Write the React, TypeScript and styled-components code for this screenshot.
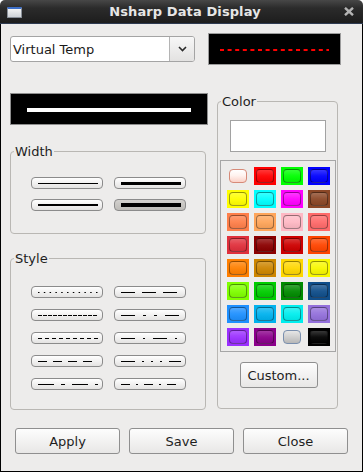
import React from "react";
import styled, { createGlobalStyle } from "styled-components";

const Global = createGlobalStyle`
  html, body { margin: 0; padding: 0; background: #ffffff; }
  body { font-family: "DejaVu Sans", "Liberation Sans", sans-serif; font-size: 13px; color: #1e1e1e; }
  * { box-sizing: border-box; }
`;

const Window = styled.div`
  width: 363px;
  height: 472px;
  display: flex;
  flex-direction: column;
`;

const TitleBar = styled.div`
  height: 24px;
  flex: none;
  border-radius: 5px 5px 0 0;
  background: linear-gradient(180deg, #474747 0%, #2b2b2b 35%, #1d1d1d 100%);
  border-bottom: 1px solid #2d3a50;
  display: flex;
  align-items: center;
  padding: 0 9px 0 7px;
`;

const TitleIcon = styled.div`
  width: 15px;
  height: 11px;
  margin-top: 2px;
  background: linear-gradient(180deg, #f4f4f4, #cfd3d8);
  border: 1px solid #8a9099;
  border-top: 2px solid #3d6fc8;
  border-radius: 1px;
`;

const Title = styled.div`
  flex: 1;
  text-align: center;
  font-weight: bold;
  font-size: 13px;
  color: #e6e6e6;
  letter-spacing: 0.1px;
  margin-left: 4px;
`;

const Body = styled.div`
  flex: 1;
  background: #edeceb;
  border-left: 1px solid #000;
  border-right: 1px solid #000;
  border-bottom: 1px solid #000;
  display: flex;
  flex-direction: column;
  padding: 9px 0 0 9px;
`;

const TopRow = styled.div`
  display: flex;
  align-items: center;
  gap: 13px;
  height: 32px;
`;

const Combo = styled.div`
  width: 185px;
  height: 26px;
  border: 1px solid #a4a4a4;
  border-radius: 3px;
  background: #ffffff;
  display: flex;
  overflow: hidden;
`;

const ComboText = styled.div`
  flex: 1;
  padding-left: 2px;
  display: flex;
  align-items: center;
  font-size: 13px;
  color: #1a1a1a;
`;

const ComboButton = styled.div`
  width: 25px;
  border-left: 1px solid #b4b4b4;
  background: linear-gradient(180deg, #f7f7f7, #e3e2e1);
  display: flex;
  align-items: center;
  justify-content: center;
`;

const DashPreview = styled.div`
  width: 133px;
  height: 32px;
  background: #000;
  border: 1px solid #9c9c9c;
  display: flex;
  align-items: center;
  justify-content: center;
`;

const MainRow = styled.div`
  display: flex;
  gap: 9px;
  margin-top: 28px;
  align-items: flex-start;
`;

const LeftCol = styled.div`
  width: 198px;
  display: flex;
  flex-direction: column;
  align-items: flex-start;
`;

const LinePreview = styled.div`
  width: 198px;
  height: 32px;
  background: #000;
  border: 1px solid #8e8e8e;
  display: flex;
  align-items: center;
  padding: 0 16px;
`;

const WhiteLine = styled.div`
  flex: 1;
  height: 4px;
  margin-top: 1px;
  background: #ffffff;
`;

const Group = styled.fieldset<{ $w: number; $mt: number }>`
  width: ${(p) => p.$w}px;
  margin: ${(p) => p.$mt}px 0 0 0;
  padding: 0;
  border: 1px solid #b9b7b3;
  border-radius: 4px;
  min-width: 0;
`;

const Legend = styled.legend`
  padding: 0 1px;
  margin-left: 3px;
  font-size: 13px;
  line-height: 15px;
  color: #1e1e1e;
`;

const ButtonGrid = styled.div<{ $pt: number; $pb: number; $gap: number }>`
  display: grid;
  grid-template-columns: 72px 72px;
  column-gap: 11px;
  row-gap: ${(p) => p.$gap}px;
  justify-content: center;
  padding: ${(p) => p.$pt}px 0 ${(p) => p.$pb}px 0;
`;

const LineButton = styled.div<{ $selected?: boolean }>`
  height: 12px;
  border: 1px solid #8b8b8b;
  border-radius: 4px;
  background: ${(p) =>
    p.$selected
      ? "linear-gradient(180deg, #d3d1ce, #bdbbb7)"
      : "linear-gradient(180deg, #ffffff, #e4e3e2)"};
  display: flex;
  align-items: center;
  padding: 0 4px 0 6px;
`;

const Bar = styled.div<{ $t: number }>`
  flex: 1;
  height: ${(p) => p.$t}px;
  background: #000;
`;

const ColorInner = styled.div`
  display: flex;
  flex-direction: column;
  align-items: center;
  padding: 11px 0 20px 0;
`;

const ColorPreview = styled.div`
  width: 96px;
  height: 32px;
  background: #ffffff;
  border: 1px solid #a2a2a2;
`;

const SwatchPanel = styled.div`
  margin-top: 8px;
  margin-left: 1px;
  width: 116px;
  border: 1px solid #a6a6a6;
  display: grid;
  grid-template-columns: repeat(4, 22px);
  column-gap: 5px;
  row-gap: 5px;
  padding: 6px 5px 5px 6px;
`;

const Swatch = styled.div<{ $bg: string }>`
  width: 22px;
  height: 18px;
  padding: 2px;
  background: ${(p) => p.$bg};
  display: flex;
`;

const SwatchFace = styled.div<{ $face: string; $edge: string }>`
  flex: 1;
  border-radius: 4px;
  border: 1px solid ${(p) => p.$edge};
  background: ${(p) => p.$face};
`;

const PushButton = styled.button<{ $w: number }>`
  width: ${(p) => p.$w}px;
  height: 26px;
  border: 1px solid #8f8f8f;
  border-radius: 3px;
  background: linear-gradient(180deg, #fdfdfd, #e8e7e6);
  font-family: "DejaVu Sans", "Liberation Sans", sans-serif;
  font-size: 13px;
  color: #1e1e1e;
  padding: 0;
  display: flex;
  align-items: center;
  justify-content: center;
`;

const CustomWrap = styled.div`
  margin-top: 10px;
  margin-left: 2px;
`;

const ButtonRow = styled.div`
  display: flex;
  gap: 9px;
  margin-top: 18px;
  padding-left: 5px;
`;

const widths = [1, 3, 2, 4];

const styles = [
  "1.5 4.3",
  "14 7",
  "4 1",
  "14 8 3 8 3 8",
  "4 3",
  "14 8 2 8",
  "9 6",
  "14 7 2 7 2 7 2 7",
  "16 7 4 7",
  "9 6 2 6",
];

type Sw = { c: string; special?: "white" | "gray" };
const swatches: Sw[] = [
  { c: "#ffffff", special: "white" }, { c: "#ff0000" }, { c: "#00ff00" }, { c: "#0000ff" },
  { c: "#ffff00" }, { c: "#00ffff" }, { c: "#ff00ff" }, { c: "#8b4726" },
  { c: "#ff7f4a" }, { c: "#ffa55a" }, { c: "#ffb8c4" }, { c: "#ff6a6a" },
  { c: "#e0303c" }, { c: "#8b0000" }, { c: "#cd0000" }, { c: "#ff4500" },
  { c: "#ff7f00" }, { c: "#cd8500" }, { c: "#ffd700" }, { c: "#f8f800" },
  { c: "#7fff00" }, { c: "#00cd00" }, { c: "#008b00" }, { c: "#104e8b" },
  { c: "#1e90ff" }, { c: "#00b2ee" }, { c: "#00eeee" }, { c: "#9370db" },
  { c: "#9b30ff" }, { c: "#8b008b" }, { c: "#c8c8c8", special: "gray" }, { c: "#000000" },
];

function swatchProps(s: Sw) {
  if (s.special === "white") {
    return {
      bg: "transparent",
      face: "linear-gradient(180deg, #ffffff 0%, #fff3ef 45%, #fbd2c8 100%)",
      edge: "#d68a78",
    };
  }
  if (s.special === "gray") {
    return {
      bg: "transparent",
      face: "linear-gradient(180deg, #e6e6e6 0%, #cfcfcf 50%, #b7b7b7 100%)",
      edge: "#7a8fae",
    };
  }
  return {
    bg: s.c,
    face: `linear-gradient(180deg, rgba(255,255,255,0.22) 0%, rgba(255,255,255,0.05) 50%, rgba(0,0,0,0.06) 100%), ${s.c}`,
    edge: "rgba(0,0,0,0.38)",
  };
}

const StyleLine: React.FC<{ dash: string }> = ({ dash }) => (
  <svg width="60" height="3" style={{ display: "block" }}>
    <line x1="0" y1="1.5" x2="60" y2="1.5" stroke="#000" strokeWidth="1" strokeDasharray={dash} />
  </svg>
);

const StyleButton = styled(LineButton)`
  padding: 0 0 0 6px;
`;

export default function App() {
  return (
    <>
      <Global />
      <Window>
        <TitleBar>
          <TitleIcon />
          <Title>Nsharp Data Display</Title>
          <svg width="10" height="9" viewBox="0 0 10 9">
            <path d="M1 0.8 L9 8.2 M9 0.8 L1 8.2" stroke="#b4b4b4" strokeWidth="2.4" strokeLinecap="butt" />
          </svg>
        </TitleBar>
        <Body>
          <TopRow>
            <Combo>
              <ComboText>Virtual Temp</ComboText>
              <ComboButton>
                <svg width="9" height="6" viewBox="0 0 9 6">
                  <path d="M1 1 L4.5 4.5 L8 1" stroke="#2a2a2a" strokeWidth="1.6" fill="none" />
                </svg>
              </ComboButton>
            </Combo>
            <DashPreview>
              <svg width="109" height="2" style={{ display: "block", marginTop: "1px" }}>
                <line x1="0" y1="1" x2="109" y2="1" stroke="#ff0000" strokeWidth="2" strokeDasharray="4 3.6" />
              </svg>
            </DashPreview>
          </TopRow>
          <MainRow>
            <LeftCol>
              <LinePreview>
                <WhiteLine />
              </LinePreview>
              <Group $w={196} $mt={19}>
                <Legend>Width</Legend>
                <ButtonGrid $pt={18} $pb={22} $gap={10}>
                  {widths.map((w, i) => (
                    <LineButton key={i} $selected={w === 4}>
                      <Bar $t={w} />
                    </LineButton>
                  ))}
                </ButtonGrid>
              </Group>
              <Group $w={196} $mt={17}>
                <Legend>Style</Legend>
                <ButtonGrid $pt={20} $pb={19} $gap={11}>
                  {styles.map((d, i) => (
                    <StyleButton key={i}>
                      <StyleLine dash={d} />
                    </StyleButton>
                  ))}
                </ButtonGrid>
              </Group>
            </LeftCol>
            <Group $w={121} $mt={1}>
              <Legend>Color</Legend>
              <ColorInner>
                <ColorPreview />
                <SwatchPanel>
                  {swatches.map((s, i) => {
                    const p = swatchProps(s);
                    return (
                      <Swatch key={i} $bg={p.bg}>
                        <SwatchFace $face={p.face} $edge={p.edge} />
                      </Swatch>
                    );
                  })}
                </SwatchPanel>
                <CustomWrap>
                  <PushButton $w={78}>Custom...</PushButton>
                </CustomWrap>
              </ColorInner>
            </Group>
          </MainRow>
          <ButtonRow>
            <PushButton $w={105}>Apply</PushButton>
            <PushButton $w={105}>Save</PushButton>
            <PushButton $w={105}>Close</PushButton>
          </ButtonRow>
        </Body>
      </Window>
    </>
  );
}
